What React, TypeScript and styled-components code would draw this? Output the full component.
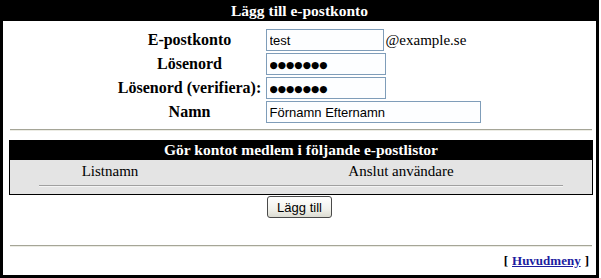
import React from 'react';
import styled, { createGlobalStyle } from 'styled-components';

const Global = createGlobalStyle`
  html, body {
    margin: 0;
    padding: 0;
    background: #fff;
  }
  body {
    font-family: 'Liberation Serif', 'Times New Roman', serif;
  }
`

const Frame = styled.div`
  box-sizing: border-box;
  width: 599px;
  height: 278px;
  border: 3px solid #000;
  border-top: 0;
  background: #fff;
  display: flex;
  flex-direction: column;
`

const TitleBar = styled.div`
  height: 21px;
  background: #000;
  color: #fff;
  font-weight: bold;
  font-size: 15.5px;
  line-height: 21px;
  text-align: center;
`

const FormGrid = styled.div`
  display: grid;
  grid-template-columns: 146px 217px;
  column-gap: 3px;
  row-gap: 2px;
  justify-content: center;
  align-items: center;
  padding: 8px 0 6px;
`

const Label = styled.div`
  font-size: 16px;
  font-weight: bold;
  text-align: center;
  white-space: nowrap;
`

const Field = styled.div`
  display: flex;
  align-items: center;
`

const Input = styled.input<{ $w: number; $dots?: boolean }>`
  box-sizing: border-box;
  width: ${p => p.$w}px;
  height: 22px;
  margin: 0;
  padding: 0 3px;
  border: 1px solid #7f9db9;
  background: #fdfeff;
  font-family: ${p => (p.$dots ? "'DejaVu Sans', sans-serif" : "'Liberation Sans', Arial, sans-serif")};
  font-size: ${p => (p.$dots ? '9.5px' : '13px')};
  color: #000;
  outline: none;
`

const Domain = styled.span`
  font-size: 15px;
  margin-left: 2px;
  white-space: nowrap;
`

const Rule = styled.hr`
  margin: 0 4px 0 7px;
  height: 0;
  border: 0;
  border-top: 1px solid #a5a597;
  border-bottom: 1px solid #ecece4;
`

const ListBox = styled.div`
  margin: 9px 3px 0 6px;
  border: 1px solid #000;
  border-top: 0;
  background: #e4e4e4;
  padding-bottom: 7px;
`

const ListTitle = styled.div`
  height: 20px;
  background: #000;
  color: #fff;
  font-weight: bold;
  font-size: 15.5px;
  line-height: 20px;
  text-align: center;
`

const ListHead = styled.div`
  display: grid;
  grid-template-columns: 200px 1fr;
  padding-top: 3px;
`

const ColHead = styled.div`
  font-size: 15px;
  line-height: 17px;
  text-align: center;
`

const ListRule = styled.hr`
  width: 90%;
  margin: 5px auto 0;
  height: 0;
  border: 0;
  border-top: 1px solid #a0a0a0;
  border-bottom: 1px solid #f4f4f4;
`

const ButtonRow = styled.div`
  display: flex;
  justify-content: center;
  padding: 1px 0 27px;
`

const Button = styled.button`
  box-sizing: border-box;
  height: 22px;
  padding: 0 9px;
  border: 1px solid #4a4a4a;
  border-radius: 3px;
  background: linear-gradient(#ffffff, #f2f2ec 60%, #dcdcd2);
  font-family: 'Liberation Sans', Arial, sans-serif;
  font-size: 13px;
  color: #000;
`

const Footer = styled.div`
  flex: 1;
  display: flex;
  align-items: center;
  justify-content: flex-end;
  padding-right: 7px;
  font-size: 13px;
  font-weight: bold;
`

const Link = styled.a`
  color: #1c1ca0;
  text-decoration: underline;
  margin: 0 4px;
`

const App = () => {
  return (
    <>
      <Global />
      <Frame>
        <TitleBar>Lägg till e-postkonto</TitleBar>
        <FormGrid>
          <Label>E-postkonto</Label>
          <Field>
            <Input $w={118} defaultValue="test" />
            <Domain>@example.se</Domain>
          </Field>
          <Label>Lösenord</Label>
          <Field>
            <Input $w={120} $dots defaultValue="●●●●●●●" />
          </Field>
          <Label>Lösenord (verifiera):</Label>
          <Field>
            <Input $w={120} $dots defaultValue="●●●●●●●" />
          </Field>
          <Label>Namn</Label>
          <Field>
            <Input $w={215} defaultValue="Förnamn Efternamn" />
          </Field>
        </FormGrid>
        <Rule />
        <ListBox>
          <ListTitle>Gör kontot medlem i följande e-postlistor</ListTitle>
          <ListHead>
            <ColHead>Listnamn</ColHead>
            <ColHead>Anslut användare</ColHead>
          </ListHead>
          <ListRule />
        </ListBox>
        <ButtonRow>
          <Button>Lägg till</Button>
        </ButtonRow>
        <Rule />
        <Footer>
          [<Link href="#">Huvudmeny</Link>]
        </Footer>
      </Frame>
    </>
  )
}

export default App;
